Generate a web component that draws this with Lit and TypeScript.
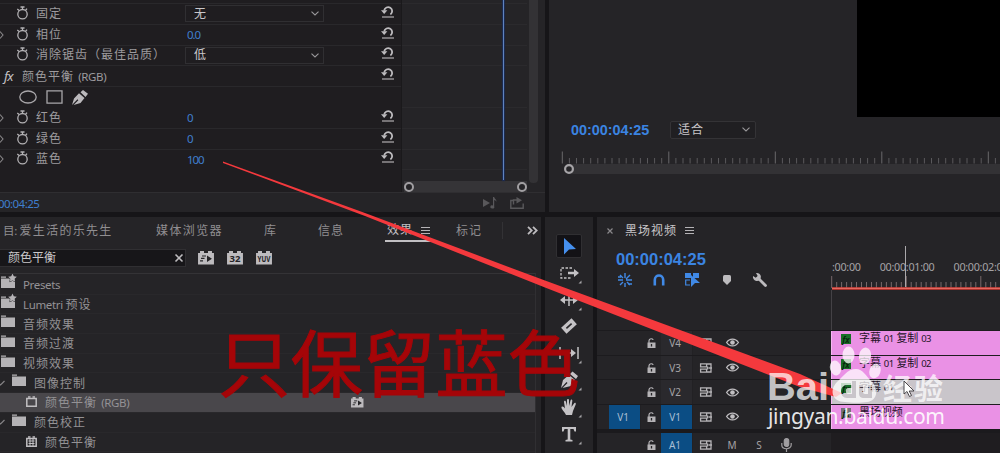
import { LitElement, html, css, svg } from "lit";
import { customElement } from "lit/decorators.js";
import { classMap } from "lit/directives/class-map.js";

const shared = css`
  :host { display: block; box-sizing: border-box; overflow: hidden; min-width: 0; }
  * { box-sizing: border-box; }
  svg { display: block; flex: none; overflow: visible; }
  span { white-space: nowrap; line-height: 1; display: block; flex: none; }
  .cjk { font-size: 12px; letter-spacing: 1px; }
  .cjk i { font-style: normal; letter-spacing: -0.35px; font-size: 11.5px; }
`;

const stopwatch = html`<svg class="watch" width="13" height="14" viewBox="0 0 13 14" fill="none" stroke="#b3b1b4" stroke-width="1.3"><circle cx="6.500" cy="8.200" r="4.700"/><path d="M4.500 1h4M6.500 1v2.500M1.300 3l1.800 1.600M11 2.600 9.600 4.200"/></svg>`;
const reset = html`<svg class="reset" width="13" height="13" viewBox="0 0 13 13" fill="none" stroke="#bdbbbe" stroke-width="1.800"><path d="M3.200 5.500a4 4 0 1 1 6.200 3.900"/><path d="M0 5.300h6.400L3.200 9z" fill="#bdbbbe" stroke="none"/><path d="M1 12h12" stroke-width="1.100"/></svg>`;
const chevron = html`<svg width="8" height="5" viewBox="0 0 8 5" fill="none" stroke="#9a989b" stroke-width="1.100"><path d="M.5.7 4 4 7.500.7"/></svg>`;
const menu = html`<svg width="9" height="8" viewBox="0 0 9 8" stroke="#b5b3b6" stroke-width="1"><path d="M0 .5h9M0 3.500h9M0 6.500h9"/></svg>`;

type Row = { name?: string; suffix?: string; kind: "select" | "num" | "head" | "mask"; value?: string; twirl?: boolean };
const params: Row[] = [
  { name: "固定", kind: "select", value: "无" },
  { name: "相位", kind: "num", value: "0.0", twirl: true },
  { name: "消除锯齿（最佳品质）", kind: "select", value: "低" },
  { name: "颜色平衡", suffix: "(RGB)", kind: "head" },
  { kind: "mask" },
  { name: "红色", kind: "num", value: "0", twirl: true },
  { name: "绿色", kind: "num", value: "0", twirl: true },
  { name: "蓝色", kind: "num", value: "100", twirl: true },
];

@customElement("effect-controls")
export class EffectControls extends LitElement {
  static styles = [shared, css`
    :host { background: #252427; display: grid; grid-template-rows: 192px 20px; }
    .body { display: grid; grid-template-columns: 402px 125px 2px 9px; }
    .params { background: #1f1d20; padding-top: 3px; border-right: 1px solid #1a191b; }
    .row { height: 20.8px; display: grid; grid-template-columns: 16px 20px 151px 190px 1fr; align-items: center; border-top: 1px solid #29282b; color: #9d9b9e; }
    .row.head { grid-template-columns: 4px 18px 355px 1fr; }
    .row.head .cjk { margin-top: 2px; }
    .row.mask { display: flex; gap: 9px; padding-left: 19px; border-top-color: #29282b; }
    .row.mask + .row { border-top-color: transparent; }
    .fx { font: italic 13px "Noto Sans", sans-serif; letter-spacing: -0.8px; color: #c4c2c5; }
    .watch { margin-top: -2px; }
    .select { height: 17px; width: 139px; margin-left: -2px; border: 1px solid #302f32; display: flex; align-items: center; justify-content: space-between; padding: 0 4px 0 8px; color: #c9c7ca; }
    .num { color: #3f7fce; font-size: 11.5px; letter-spacing: -1.1px; }
    .reset { margin: -5px 0 0 4px; }
    .graph { display: flex; flex-direction: column; }
    .lanes { height: 181px; padding-top: 3px; position: relative; }
    .lane { height: 20.8px; border-top: 1px solid #2b2a2d; }
    .lane.plain { border-color: transparent; }
    .head-line { position: absolute; left: 100.5px; top: 0; width: 1.5px; height: 180px; background: #5f83bd; box-shadow: 0 0 1px 1px #1c2c55; }
    .zoom { height: 11px; margin-left: 2px; background: #353437; display: flex; justify-content: space-between; align-items: center; }
    .knob { width: 10px; height: 10px; border: 2.4px solid #a19fa2; border-radius: 50%; background: #252427; }
    .vscroll { height: 183px; background: #333235; border-radius: 0 0 4px 4px; }
    .foot { border-top: 1px solid #2f2e31; display: flex; justify-content: space-between; align-items: center; padding: 2px 21px 0 0; }
    .time { color: #3f7fce; font-size: 11.5px; letter-spacing: -0.55px; margin-left: -2px; }
    .acts { display: flex; gap: 13px; margin-top: -2px; }
  `];
  row(r: Row) {
    if (r.kind === "mask") return html`<div class="row mask">
      <svg width="18" height="14" viewBox="0 0 18 14" fill="none" stroke="#a9a7aa" stroke-width="1.300"><ellipse cx="9" cy="7" rx="8.200" ry="6"/></svg>
      <svg width="17" height="14" viewBox="0 0 17 14" fill="none" stroke="#a9a7aa" stroke-width="1.300"><path d="M1 .8h15v12.400H1z"/></svg>
      <svg width="16" height="15" viewBox="0 0 16 15" fill="#bbb9bc"><path d="M0 15 2 8.500 7 3.300 12.500 8 8.500 13 1.600 14.900 6.300 10.300 5.500 9.300zM8.500 2.300 11 0 16 3.700 13.500 7z"/></svg></div>`;
    if (r.kind === "head") return html`<div class="row head"><span></span><span class="fx">fx</span><span class="cjk">${r.name} <i>${r.suffix}</i></span>${reset}</div>`;
    return html`<div class="row">
      ${r.twirl ? html`<svg width="4" height="8" viewBox="0 0 4 8" fill="none" stroke="#8a888b" stroke-width="1.100"><path d="M0 .5 3 4 0 7.500"/></svg>` : html`<span></span>`}
      ${stopwatch}<span class="cjk">${r.name}</span>
      ${r.kind === "select" ? html`<div class="select"><span class="cjk">${r.value}</span>${chevron}</div>` : html`<span class="num">${r.value}</span>`}
      ${reset}</div>`;
  }
  render() {
    return html`<div class="body">
        <div class="params">${params.map((r) => this.row(r))}</div>
        <div class="graph"><div class="lanes">${params.map((_, i) => html`<div class=${classMap({ lane: true, plain: i === 4 })}></div>`)}<div class="lane"></div><div class="head-line"></div></div>
          <div class="zoom"><div class="knob"></div><div class="knob"></div></div></div>
        <div></div><div class="vscroll"></div></div>
      <div class="foot"><span class="time">00:04:25</span><div class="acts">
        <svg width="14" height="12" viewBox="0 0 14 12" fill="#59585b"><path d="M0 2l7 4-7 4zM10 0h1.200c.2 2 2.800 2 2 5-.3-1.500-1-1.900-2-2v6.500a2 1.600 0 1 1-1.200-1z"/></svg>
        <svg width="14" height="12" viewBox="0 0 14 12" fill="none" stroke="#59585b" stroke-width="1.400"><path d="M4 3.500H.8v7.700h12.400V6.500M3.500 7.500V3H8"/><path d="M6.500 0 12 3.200 6.500 6.500z" fill="#59585b" stroke="none"/></svg>
      </div></div>`;
  }
}

@customElement("program-monitor")
export class ProgramMonitor extends LitElement {
  static styles = [shared, css`
    :host { background: #252427; display: flex; flex-direction: column; }
    .video { height: 117px; width: 143px; background: #000; align-self: flex-end; flex: none; }
    .bar { display: flex; align-items: center; height: 25px; padding-left: 22px; gap: 21px; flex: none; }
    .time { color: #3b84e2; font: bold 14.4px "Liberation Sans", sans-serif; width: 78px; letter-spacing: -0.02px; }
    .fit { width: 86px; height: 18px; border: 1px solid #343336; background: #201f22; display: flex; align-items: center; justify-content: space-between; padding: 0 5px 0 7px; color: #c9c7ca; border-radius: 2px; }
    .ruler { margin-top: 9px; }
  `];
  render() {
    return html`<div class="video"></div>
      <div class="bar"><span class="time">00:00:04:25</span><div class="fit"><span class="cjk">适合</span>${chevron}</div></div>
      <svg class="ruler" width="451" height="24" viewBox="0 0 451 24"><path d="M20 13h431v10H20z" fill="#333235"/>
        ${Array.from({ length: 62 }, (_, i) => svg`<path d=${`M${(13.3 + i * 7.1).toFixed(1)} ${i % 15 ? 7 : 0.5}V12.500`} stroke=${i % 15 ? "#5a595c" : "#69686b"} stroke-width="1"/>`)}
        <circle cx="20" cy="18" r="3.900" fill="#252427" stroke="#a6a4a7" stroke-width="2.200"/></svg>`;
  }
}

const folder = (star: boolean) => html`<svg class="ico" width="14" height="11" viewBox="0 0 14 11" fill="#b5b3b6"><path d="M0-.5h5V.7H0zM0 1.500h14V11H0z"/>${star ? svg`<path d="m11.500-3.500 1.300 2.800 3 .4-2.200 2.100.5 3-2.600-1.500-2.600 1.500.5-3L7.200-.3l3-.4z" stroke="#252427" stroke-width="1" paint-order="stroke"/>` : ""}</svg>`;
const effectIcon = (solid: boolean) => html`<svg class="ico" width="11" height="11" viewBox="0 0 11 11" fill="none" stroke="#c1bfc2" stroke-width="1.500"><path d="M.8 2.500h9.400v7.700H.8z"/><path d="M2 1h2.500M6.500 1H9"/>${solid ? svg`<path d="M2.500 5h6M2.500 7.500h6M4 3v7M7 3v7" stroke-width="1"/>` : ""}</svg>`;
const badge = (label: string, w = 16) => html`<svg width=${w} height=${w * 0.84} viewBox="0 0 16 13.500"><path d="M0 2h2V0h4v2h4V0h4v2h2v11.500H0z" fill="#bdbbbe"/>
  ${label === "fx" ? svg`<path d="M9 4.500 14 7.700 9 11z" fill="#252427"/><path d="M4 5h4M3 7.500h3.500M2 10h3" stroke="#252427" stroke-width="1.200"/>` : svg`<text x="8" y="11" text-anchor="middle" textLength=${label === "32" ? 11 : 13} lengthAdjust="spacingAndGlyphs" font-size=${label === "32" ? 9.5 : 8} font-weight="bold" fill="#252427">${label}</text>`}</svg>`;

type Item = { name: string; cjk?: string; suffix?: string; icon: "star" | "folder" | "fx" | "fx2"; level: number; open?: boolean; sel?: boolean };
const tree: Item[] = [
  { name: "Presets", icon: "star", level: 0 },
  { name: "Lumetri", cjk: "预设", icon: "star", level: 0 },
  { name: "", cjk: "音频效果", icon: "folder", level: 0 },
  { name: "", cjk: "音频过渡", icon: "folder", level: 0 },
  { name: "", cjk: "视频效果", icon: "folder", level: 0 },
  { name: "", cjk: "图像控制", icon: "folder", level: 1, open: true },
  { name: "", cjk: "颜色平衡", suffix: "(RGB)", icon: "fx", level: 2, sel: true },
  { name: "", cjk: "颜色校正", icon: "folder", level: 1, open: true },
  { name: "", cjk: "颜色平衡", icon: "fx2", level: 2 },
];

@customElement("effects-panel")
export class EffectsPanel extends LitElement {
  static styles = [shared, css`
    :host { background: #252427; }
    .tabs { height: 31px; display: grid; grid-template-columns: 3px 153px 108px 54px 67px 71px 46px 25px 1fr; align-items: center; color: #908e91; }
    .tabs .cjk { margin-top: -4px; }
    .tabs .project { letter-spacing: 1.3px; }
    .tabs .browser { letter-spacing: 1.4px; }
    .active { height: 25px; width: 46px; padding-left: 2px; padding-right: 1px; align-self: start; border-bottom: 2px solid #c1bfc2; display: flex; align-items: center; justify-content: space-between; color: #c1bfc2; }
    .active .cjk { margin-top: 2px; }
    .active svg { margin-top: 4px; }
    .div { height: 17px; width: 1px; background: #333235; margin-top: -5px; }
    .more { margin-top: -4px; }
    .tools { height: 24px; display: flex; align-items: flex-start; gap: 13px; margin-top: 1px; }
    .search { width: 186px; height: 18px; background: #171619; border: 1px solid #302f32; border-left: 0; display: flex; align-items: center; justify-content: space-between; padding: 0 2px 0 8px; color: #c9c7ca; margin-right: -1px; }
    .search .cjk { letter-spacing: 0; }
    .tools > svg { margin-top: 2px; }
    .list { width: 536px; border-top: 1px solid #343336; border-right: 1px solid #302f32; height: 180px; padding-top: 1px; }
    .item { height: 19.7px; display: flex; align-items: center; border-bottom: 1px solid #29282b; color: #949295; }
    .item.sel { background: #49474b; }
    .item .cjk { margin-top: 2px; }
    .ico { margin: -4px 8px 0 1px; }
    .l1 .ico { margin-left: 2px; margin-right: 8px; }
    .l2 .ico { margin-left: 26px; margin-right: 8px; margin-top: -1px; }
    .accel { margin-left: auto; margin-right: 172px; }
  `];
  render() {
    return html`<div class="tabs"><span></span><span class="cjk project"><i>目: </i>爱生活的乐先生</span><span class="cjk browser">媒体浏览器</span><span class="cjk">库</span><span class="cjk">信息</span>
        <div class="active"><span class="cjk">效果</span>${menu}</div><span class="cjk">标记</span><div class="div"></div>
        <svg class="more" width="11" height="9" viewBox="0 0 11 9" fill="none" stroke="#bdbbbe" stroke-width="1.800"><path d="m1 .8 3.700 3.700L1 8.200M6 .8l3.700 3.700L6 8.200"/></svg></div>
      <div class="tools"><div class="search"><span class="cjk">颜色平衡</span><svg width="8" height="8" viewBox="0 0 8 8" stroke="#bdbbbe" stroke-width="1.600"><path d="m.5.5 7 7M7.500.5l-7 7"/></svg></div>
        ${badge("fx")}${badge("32")}${badge("YUV")}</div>
      <div class="list">${tree.map((t) => html`<div class=${classMap({ item: true, sel: !!t.sel, ["l" + t.level]: true })}>
        ${t.open ? html`<svg width="10" height="6" viewBox="0 0 10 6" fill="none" stroke="#858386" stroke-width="1.200"><path d="M-2 3 .5 5 4.500 1"/></svg>` : ""}
        ${t.icon === "star" || t.icon === "folder" ? folder(t.icon === "star") : effectIcon(t.icon === "fx2")}
        <span class="cjk">${t.name ? html`<i>${t.name} </i>` : ""}${t.cjk ?? ""}${t.suffix ? html` <i>${t.suffix}</i>` : ""}</span>
        ${t.sel ? html`<div class="accel">${badge("fx", 12.5)}</div>` : ""}</div>`)}</div>`;
  }
}

const c = "#c4c2c5";
const toolIcons = [
  svg`<path d="M-5-8 7 3 0 3.500-5 8.500z" fill="#4690ee"/>`,
  svg`<path d="M3-5H-8V5H3" fill="none" stroke=${c} stroke-width="1.300" stroke-dasharray="2.500 1.500"/><path d="M-1-1.200h6V-4l5 4-5 4V1.200h-6z" fill=${c}/>`,
  svg`<path d="M0-6V6M-7 0H7" stroke=${c} stroke-width="1.500"/><path d="M-9 0l5-4v8zM9 0 4-4v8z" fill=${c}/>`,
  svg`<g transform="rotate(-42)"><path d="M-7-4H7V4H-7z" fill=${c}/><path d="M-3.500 0h7" stroke="#252427" stroke-width="1.600"/></g>`,
  svg`<path d="M-9-6V6M9-6V6M-7 0H5" stroke=${c} stroke-width="1.500"/><path d="M7 0 2-4v8z" fill=${c}/>`,
  svg`<path d="M-8 8-6 0 0-5l6 5L2 6-6.500 8-1.500 3-2.500 2zM1-6l2.500-2.500L9-4 7-1z" fill=${c}/>`,
  svg`<path d="M-3 8C-5 4-8 2-7.500 0c1-1 2.500 0 3.500 1.500L-5-5c0-1.700 1.700-1.700 2 0l1 4V-7c0-1.500 2-1.500 2 0v6l1.500-5.500c.5-1.500 2-1 1.800.5L2.500 0 5-3.500c.8-1.300 2.300-.5 1.700 1L4 4 3 8z" fill=${c}/>`,
  svg`<path d="M-7-7H7v4.500H5.500L4.500-5H1.300V5.500l2.200.5v1.500h-7V6l2.200-.5V-5H-4.500l-1 2.500H-7z" fill=${c}/>`,
];

@customElement("tool-bar")
export class ToolBar extends LitElement {
  static styles = [shared, css`
    :host { background: #252427; padding: 17px 0 0 11px; display: flex; flex-direction: column; gap: 2.8px; }
    .tool { width: 26px; height: 24px; display: grid; place-items: center; flex: none; }
    .on { background: #131216; border: 1px solid #302f32; border-radius: 2px; }
  `];
  render() {
    return toolIcons.map((ic, i) => html`<div class=${classMap({ tool: true, on: i === 0 })}><svg width="20" height="20" viewBox="-10 -10 20 20">${ic}${i > 0 && i !== 3 ? svg`<path d="M12.500 7.500v3H9.500z" fill="#a6a4a7"/>` : ""}</svg></div>`);
  }
}

const lock = html`<svg width="9" height="10" viewBox="0 0 9 10"><path d="M.5 4.500h8V10h-8z" fill="#b5b3b6"/><path d="M2 5V2.800C2 .2 6 .2 6 2" fill="none" stroke="#b5b3b6" stroke-width="1.200"/><path d="M4.500 6v2.500" stroke="#252427" stroke-width="1.300"/></svg>`;
const sync = html`<svg width="12" height="10" viewBox="0 0 12 10" fill="none" stroke="#b5b3b6" stroke-width="1.300"><path d="M.6.8h6v3h-6zM.6 6.200h6v3h-6zM7 1h4v8H7M8.500 5H12M7.500 3.500v3"/></svg>`;
const eye = html`<svg width="13" height="9" viewBox="0 0 13 9"><path d="M.6 4.500C3.500 0 9.500 0 12.400 4.500 9.500 9 3.500 9 .6 4.500z" fill="none" stroke="#c1bfc2" stroke-width="1.300"/><circle cx="6.500" cy="4.500" r="2.300" fill="#c1bfc2"/></svg>`;
const mic = html`<svg width="11" height="14" viewBox="0 0 11 14" fill="none" stroke="#a09ea1" stroke-width="1.200"><rect x="3.300" y=".5" width="4.400" height="8" rx="2.200" fill="#a09ea1"/><path d="M.8 5v2c0 5 9.400 5 9.400 0V5M5.500 11v3"/></svg>`;

@customElement("timeline-panel")
export class TimelinePanel extends LitElement {
  static styles = [shared, css`
    :host { background: #252427; display: grid; grid-template-columns: 234px 1fr; grid-template-rows: 113px 1fr; }
    .top { display: flex; flex-direction: column; }
    .title { display: flex; align-items: center; height: 27px; padding-left: 10px; color: #c9c7ca; }
    .title .cjk { margin: 0 8px 0 12px; }
    .time { color: #3b84e2; font: bold 16.5px "Liberation Sans", sans-serif; margin: 7px 0 0 19px; line-height: 16px; }
    .opts { display: grid; grid-template-columns: 34px 33px 35px 33px 33px; padding: 4px 0 0 11px; place-items: center; height: 22px; }
    .ruler { display: flex; flex-direction: column; color: #a5a3a6; }
    .labels { display: flex; margin-top: 43px; height: 14px; align-items: center; padding-left: 1px; gap: 19px; font-size: 10.8px; }
    .labels span { letter-spacing: -0.3px; }
    .ruler svg { margin-top: 1px; }
    .track { height: 24.7px; display: grid; grid-template-columns: 12px 32px 20px 32px 26px 26px 28px 1fr; align-items: center; justify-items: center; border-top: 1px solid #1c1b1e; color: #a5a3a6; font-size: 10px; }
    .name { align-self: stretch; width: 32px; display: grid; place-items: center; background: #2a292d; padding-right: 3px; border-right: 1px solid #222124; }
    .blue { background: #0b4d84; color: #a9bfd4; }
    .src { grid-column: 2; }
    .l { grid-column: 3; } .n { grid-column: 4; } .s { grid-column: 5; } .e { grid-column: 6; } .so { grid-column: 7; } .m { grid-column: 8; justify-self: start; margin-left: 8px; }
    .track > * { grid-row: 1; }
    .audio { border-top: 4px solid #1b1a1d; height: 29px; }
    .clips { background: #1f1d20; }
    .clip { height: 23.7px; margin-top: 1px; background: #ea91e5; display: flex; align-items: flex-start; gap: 8px; padding: 3px 0 0 9px; color: #241327; border-left: 1px solid #f6b7f2; }
    .clip.sel { background: #c9c5ca; }
    .fxb { width: 10px; height: 10px; background: #176f27; color: #08250d; font: italic bold 8px "Noto Sans", sans-serif; display: grid; place-items: center; flex: none; }
    .fxb.gray { background: #777379; }
    .nm { margin-top: -2px; font-size: 11px; letter-spacing: -0.05px; }
    .nm i { font-style: normal; font-size: 9.5px; letter-spacing: -0.5px; }
    .bottom { background: #1f1d20; border-top: 4px solid #1b1a1d; height: 28px; }
  `];
  render() {
    const b = "#4089e6";
    return html`<div class="top"><div class="title"><svg width="6" height="6" viewBox="0 0 6 6" stroke="#8a888b" stroke-width="1.200"><path d="m.5.5 5 5M5.500.5l-5 5"/></svg><span class="cjk">黑场视频</span>${menu}</div>
        <span class="time">00:00:04:25</span>
        <div class="opts">
          <svg width="14" height="14" viewBox="-7 -7 14 14" stroke=${b} stroke-width="1.400"><path d="M0-7v5M0 7V3M-7 0h5M7 0H1M-5-5l3 3M5-5 1-1M-5 5l3-3M5 5 2 2M-7-3h3M3 4h4"/></svg>
          <svg width="12" height="12" viewBox="0 0 12 12" fill="none" stroke=${b} stroke-width="2.600"><path d="M1.800 11.500V6c0-6 8.400-6 8.400 0v5.500"/></svg>
          <svg width="15" height="14" viewBox="0 0 15 14" fill=${b}><path d="M0 0h6v5H0zM8 0h6v5H8zM6 2 15 10H10l-4 4z"/><path d="M5 7H.7v5H5" fill="none" stroke=${b} stroke-width="1.200"/></svg>
          <svg width="8" height="10" viewBox="0 0 8 10" fill="#bdbbbe"><path d="M0 1.500Q0 0 1.500 0h5Q8 0 8 1.500V6L4 10 0 6z"/></svg>
          <svg width="14" height="14" viewBox="0 0 14 14"><path d="m5 5 7.500 7.500" stroke="#bdbbbe" stroke-width="2.800" stroke-linecap="round"/><path d="M3 0a4 4 0 1 1-3 3l2.800 1.700L4.700 3z" fill="#bdbbbe"/></svg>
        </div></div>
      <div class="ruler"><div class="labels"><span>:00:00</span><span>00:00:01:00</span><span>00:00:02:00</span></div>
        <svg width="169" height="55" viewBox="0 0 169 55">
          ${Array.from({ length: 34 }, (_, i) => svg`<path d=${`M${(0.7 + i * 4.97).toFixed(1)} ${i % 15 ? 7 : 1}V13`} stroke="#77686a" stroke-width="1"/>`)}
          <path d="M.5 15V55" stroke="#444246"/><path d="M1 13.500h168" stroke="#d5372f" stroke-width="2.400"/><path d="M1 13.300h168" stroke="#f08f86" stroke-width=".7"/>
          <path d="M74.500-29V12" stroke="#aaa8ab"/></svg></div>
      <div>${["V4", "V3", "V2", "V1"].map((v) => html`<div class="track">${v === "V1" ? html`<div class="name blue src"><span>V1</span></div>` : ""}
          <div class="l">${lock}</div><div class=${classMap({ name: true, n: true, blue: v === "V1" })}><span>${v}</span></div><div class="s">${sync}</div><div class="e">${eye}</div></div>`)}
        <div class="track audio"><div class="l">${lock}</div><div class="name n blue"><span>A1</span></div><div class="s">${sync}</div><span class="e">M</span><span class="so">S</span><div class="m">${mic}</div></div></div>
      <div class="clips">${[["字幕", "01", "复制", "03"], ["字幕", "01", "复制", "02"], ["字幕", "01"], ["黑场视频"]].map((n, i) => html`<div class=${classMap({ clip: true, sel: i === 2 })}><div class=${classMap({ fxb: true, gray: i === 3 })}>fx</div><span class="nm">${n.map((p, k) => (k % 2 ? html` <i>${p}</i> ` : p))}</span></div>`)}<div class="bottom"></div></div>`;
  }
}

@customElement("app-root")
export class AppRoot extends LitElement {
  static styles = [shared, css`
    :host { display: grid; position: relative; width: 1000px; height: 453px; background: #161518; grid-template-rows: 212px 236px; row-gap: 5px; font-family: "Noto Sans", "Noto Sans CJK SC", sans-serif; }
    .upper { display: grid; grid-template-columns: 545px 451px; column-gap: 4px; }
    .lower { display: grid; grid-template-columns: 541px 48px 403px; column-gap: 4px; }
    .over { position: absolute; left: 0; top: 0; }
    .note { position: absolute; left: 218px; top: 324px; font-size: 72.4px; color: #a50508; -webkit-text-stroke: 0.9px #a50508; font-family: "Noto Sans CJK SC", sans-serif; line-height: 72px; }
    .mark { fill: #fff; fill-opacity: 0.74; }
  `];
  render() {
    return html`<div class="upper"><effect-controls></effect-controls><program-monitor></program-monitor></div>
      <div class="lower"><effects-panel></effects-panel><tool-bar></tool-bar><timeline-panel></timeline-panel></div>
      <span class="note">只保留蓝色</span>
      <svg class="over" width="1000" height="453" viewBox="0 0 1000 453">
        <path d="M223 161.500 365 213 545 280.500 800 374 842 393 836 397 800 387 545 287.500 365 216 223 163z" fill="#f4393d"/>
        <g class="mark">
          <text x="767" y="400" font-family="Liberation Sans, sans-serif" font-weight="bold" font-size="39" textLength="62" lengthAdjust="spacingAndGlyphs">Bai</text>
          <ellipse cx="835.500" cy="368" rx="5.500" ry="7.500" transform="rotate(-15 835.500 368)"/><ellipse cx="848.500" cy="355" rx="6" ry="8.500"/><ellipse cx="865" cy="356" rx="6" ry="8.500" transform="rotate(10 865 356)"/><ellipse cx="875" cy="371" rx="5.500" ry="7.500" transform="rotate(20 875 371)"/>
          <path fill-rule="evenodd" d="M856 369c7 0 10 7 15 12 8 7 7 20-4 21-6 1-16 1-22 0-13 0-16-12-8-20 6-5 10-13 19-13zM852 381v4h-5c-8 0-8 13 0 13h9v-17zM852 388v6h-4c-3 0-3-6 0-6zM859 385v8c0 4 2 5 5 5h8v-13h-4v9h-3q-2 0-2-2v-7z"/>
          <text x="883" y="400" font-family="Noto Sans CJK SC, sans-serif" font-weight="bold" font-size="29" textLength="60">经验</text>
          <text x="768" y="424" font-family="Noto Sans, sans-serif" font-size="21" textLength="177" fill-opacity=".9">jingyan.baidu.com</text>
        </g>
        <path d="M904 381v13l3-2.500 2.500 5 2-1-2.300-4.500H914z" fill="#fff" stroke="#39363a" stroke-width=".9"/>
      </svg>`;
  }
}
